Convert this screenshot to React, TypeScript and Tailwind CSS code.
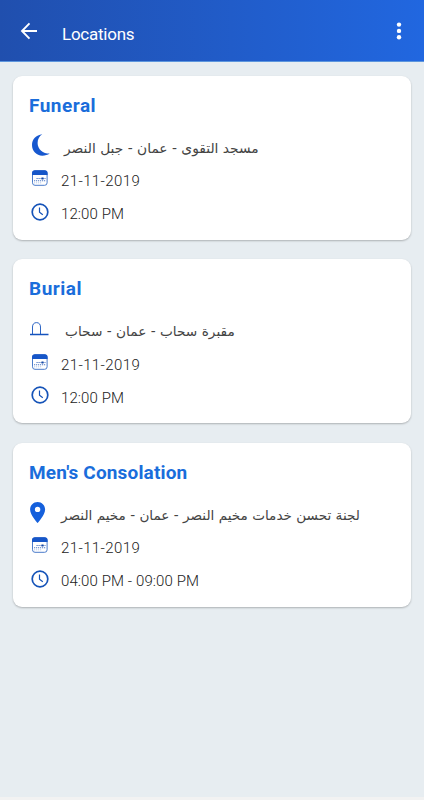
import type { ReactNode } from 'react';

type PlaceIcon = 'moon' | 'tomb' | 'pin';

interface LocationEntry {
  title: string;
  icon: PlaceIcon;
  place: string;
  placeClass: string;
  titleClass: string;
  date: string;
  time: string;
}

const LOCATIONS: LocationEntry[] = [
  {
    title: 'Funeral',
    icon: 'moon',
    place: 'مسجد التقوى - عمان - جبل النصر',
    placeClass: 'ml-[3px] text-[13.8px]',
    titleClass: 'tracking-[0.5px]',
    date: '21-11-2019',
    time: '12:00 PM',
  },
  {
    title: 'Burial',
    icon: 'tomb',
    place: 'مقبرة سحاب - عمان - سحاب',
    placeClass: 'ml-1 text-[13.7px]',
    titleClass: 'tracking-[0.5px]',
    date: '21-11-2019',
    time: '12:00 PM',
  },
  {
    title: "Men's Consolation",
    icon: 'pin',
    place: 'لجنة تحسن خدمات مخيم النصر - عمان - مخيم النصر',
    placeClass: 'text-[13.6px]',
    titleClass: 'tracking-[0.15px]',
    date: '21-11-2019',
    time: '04:00 PM - 09:00 PM',
  },
];

function MoonIcon() {
  return (
    <svg width="20" height="22" viewBox="0 0 20 22" className="ml-px">
      <path
        d="M11.300.2C5 .8 1 5.300 1 11.100c0 6 4.400 10.600 10.300 10.600 2.900 0 5.400-.7 7.400-2.100C12 19.600 6.600 15.300 6.600 8.900c0-3.600 1.700-6.900 4.700-8.700Z"
        fill="#1758cf"
      />
    </svg>
  );
}

function TombIcon() {
  return (
    <svg width="19" height="14" viewBox="0 0 19 14" fill="none" stroke="#1553bd">
      <path d="M2.500 12V5c0-2.600 1.400-4.400 4-4.400s4 1.800 4 4.400v7" strokeWidth="0.900" />
      <path d="M0 12.500h18.500" strokeWidth="1.500" />
    </svg>
  );
}

function PinIcon() {
  return (
    <svg width="16" height="21" viewBox="0 0 16 21">
      <path
        d="M7.600 0C3.400 0 .1 3.300.1 7.400.1 12.900 7.600 21 7.600 21s7.500-8.100 7.500-13.600C15.100 3.300 11.800 0 7.600 0Zm0 10.100a2.700 2.700 0 1 1 0-5.400 2.700 2.700 0 0 1 0 5.400Z"
        fill="#1560dc"
      />
    </svg>
  );
}

function CalendarIcon() {
  return (
    <svg width="16" height="16" viewBox="0 0 16 16" className="ml-[2px]">
      <rect x="0.5" y="0.800" width="14.600" height="14.500" rx="2.500" fill="#fff" stroke="#4a7bca" />
      <path d="M0 5V3C0 1.300 1.200.3 2.800.3h10c1.600 0 2.800 1 2.800 2.700v2Z" fill="#1656c8" />
      <path d="M4.500 8.500h9M2 10.800h11.500" stroke="#4f79c4" strokeWidth="1.100" strokeDasharray="1.200 0.800" />
      <rect x="9.500" y="7.500" width="2" height="2" fill="#164aa5" />
      <path d="M2 12.800h8" stroke="#a9c0e6" strokeWidth="0.800" strokeDasharray="1.200 0.800" />
    </svg>
  );
}

function ClockIcon() {
  return (
    <svg width="18" height="18" viewBox="0 0 18 18" fill="none" stroke="#1553b8" className="ml-px">
      <circle cx="9" cy="9" r="7.800" strokeWidth="1.700" />
      <path d="M8.500 4.600v4.700l3.300 2.500" strokeWidth="1.200" />
    </svg>
  );
}

const PLACE_ICONS: Record<PlaceIcon, ReactNode> = {
  moon: <MoonIcon />,
  tomb: <TombIcon />,
  pin: <PinIcon />,
};

function InfoRow({ icon, children }: { icon: ReactNode; children: ReactNode }) {
  return (
    <div className="flex h-[33.300px] items-center">
      <div className="w-[31px] shrink-0 pb-[6px]">{icon}</div>
      {children}
    </div>
  );
}

function LocationCard({ entry }: { entry: LocationEntry }) {
  return (
    <section className="h-[164px] rounded-[9px] bg-white pl-[17px] pt-[13px] shadow-[0_1px_2px_rgba(0,0,0,0.25)]">
      <h2 className={`mb-[10px] h-[33px] text-[19px] font-bold leading-[33px] text-[#1a6ddb] ${entry.titleClass} -ml-px`}>
        {entry.title}
      </h2>
      <InfoRow icon={PLACE_ICONS[entry.icon]}>
        <span
          dir="rtl"
          className={`whitespace-nowrap font-['DejaVu_Sans',sans-serif] text-[#444] ${entry.placeClass}`}
        >
          {entry.place}
        </span>
      </InfoRow>
      <InfoRow icon={<CalendarIcon />}>
        <span className="text-[15px] font-light tracking-[0.400px]">{entry.date}</span>
      </InfoRow>
      <InfoRow icon={<ClockIcon />}>
        <span className="text-[15px] font-light tracking-[0.100px]">{entry.time}</span>
      </InfoRow>
    </section>
  );
}

export default function App() {
  return (
    <div className="flex h-[800px] w-[424px] flex-col overflow-hidden bg-[#e7edf1] font-[Roboto,sans-serif] text-[#222]">
      <header className="flex h-[61.500px] shrink-0 items-center border-b border-[#5d96dd] bg-linear-to-r from-[#204fae] to-[#2167e0] pl-5 pr-[22px] text-white">
        <svg width="18" height="18" viewBox="0 0 18 18" fill="none" stroke="currentColor" strokeWidth="1.900" className="mt-px">
          <path d="M9.500 1.300 2 9l7.500 7.700M2 9h15" />
        </svg>
        <h1 className="ml-6 mt-[7px] text-[17px] leading-6 tracking-[-0.250px]">Locations</h1>
        <svg width="6" height="18" viewBox="0 0 6 18" fill="currentColor" className="ml-auto mt-px">
          <circle cx="3" cy="2.600" r="2.200" />
          <circle cx="3" cy="8.900" r="2.200" />
          <circle cx="3" cy="15.200" r="2.200" />
        </svg>
      </header>
      <main className="flex grow flex-col gap-[19.500px] px-[13px] pt-[14px]">
        {LOCATIONS.map((entry) => (
          <LocationCard key={entry.title} entry={entry} />
        ))}
      </main>
      <footer className="h-[3px] shrink-0 bg-[#f2f2f2]" />
    </div>
  );
}
